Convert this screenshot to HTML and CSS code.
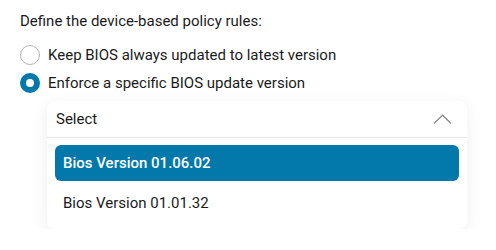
FILE: index.html
```html
<!DOCTYPE html>
<html lang="en">
<head>
  <meta charset="UTF-8" />
  <meta name="viewport" content="width=device-width, initial-scale=1.0" />
  <title>Device policy</title>
  <link rel="stylesheet" href="styles.css">
</head>
<body>
  <div class="policy">
    <p class="policy-title">Define the device-based policy rules:</p>

    <!-- Opzioni -->
    <label class="radio-row">
      <span class="radio"></span>
      <span class="radio-label">Keep BIOS always updated to latest version</span>
    </label>
    <label class="radio-row">
      <span class="radio checked"></span>
      <span class="radio-label">Enforce a specific BIOS update version</span>
    </label>

    <!-- Dropdown aperto -->
    <div class="dropdown">
      <div class="dropdown-header">
        <span>Select</span>
        <svg class="chevron" width="19" height="10" viewBox="0 0 19 10">
          <polyline points="1,9.5 9.5,1.2 18,9.5" fill="none" stroke="#8a8a8a" stroke-width="1.2" />
        </svg>
      </div>
      <ul class="dropdown-list">
        <li class="option selected">Bios Version 01.06.02</li>
        <li class="option">Bios Version 01.01.32</li>
      </ul>
    </div>
  </div>
</body>
</html>
```

FILE: styles.css
```css
body {
  margin: 0;
  background-color: #fff;
  font-family: Roboto, "Noto Sans", sans-serif;
  color: #1b1b1b;
  font-size: 15px;
}

.policy {
  padding: 11px 0 0 20px;
}

.policy-title {
  margin: 0 0 10px;
  line-height: 20px;
}

.radio-row {
  display: flex;
  align-items: center;
  gap: 8px;
  height: 28px;
}

.radio {
  box-sizing: border-box;
  width: 20px;
  height: 20px;
  border: 1px solid #b5b5b5;
  border-radius: 50%;
  background: #fff;
}

.radio.checked {
  border: 6px solid #0278ab;
}

.dropdown {
  margin: 4px 0 0 27px;
  width: 420px;
  background: #fff;
  border-radius: 8px;
  box-shadow: 0 4px 18px rgba(0, 0, 0, 0.07);
}

.dropdown-header {
  display: flex;
  align-items: center;
  justify-content: space-between;
  height: 36px;
  padding: 0 15px 0 9px;
  border-bottom: 1px solid #e8e8e8;
}

.chevron {
  display: block;
}

.dropdown-list {
  list-style: none;
  margin: 0;
  padding: 7px 8px 8px;
  display: flex;
  flex-direction: column;
  gap: 4px;
}

.option {
  height: 36px;
  line-height: 36px;
  padding: 0 8px;
  border-radius: 6px;
}

.option.selected {
  background-color: #0278ab;
  color: #fff;
  font-weight: 500;
}
```
